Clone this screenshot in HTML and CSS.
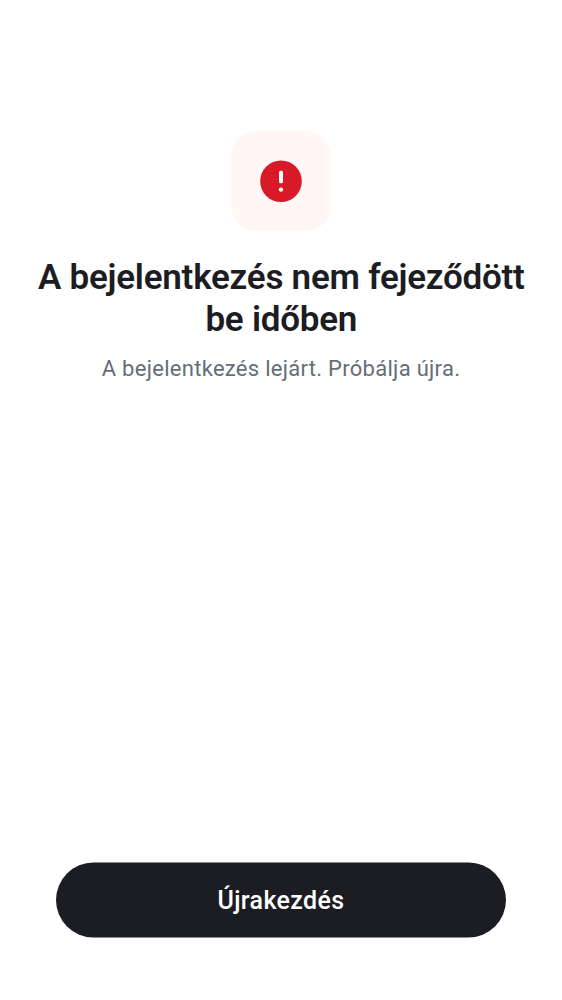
FILE: index.html
```html
<!DOCTYPE html>
<html lang="hu">
<head>
<meta charset="utf-8">
<title>Bejelentkezés</title>
<link rel="stylesheet" href="styles.css">
</head>
<body>
<main class="screen">
<div class="badge">
<svg class="badge-icon" viewBox="0 0 42 42" aria-hidden="true">
<circle cx="21" cy="21.2" r="20.8" fill="#d71928"/>
<rect x="19" y="10.7" width="4" height="12.6" rx="1.5" fill="#fff"/>
<circle cx="21" cy="29.6" r="2.2" fill="#fff"/>
</svg>
</div>
<h1 class="title">A bejelentkezés nem fejeződött<br>be időben</h1>
<p class="message">A bejelentkezés lejárt. Próbálja újra.</p>
<button class="restart" type="button">Újrakezdés</button>
</main>
</body>
</html>
```
FILE: styles.css
```css
body {
  margin: 0;
  background: #fff;
  font-family: Roboto, sans-serif;
}
.screen {
  box-sizing: border-box;
  height: 1000px;
  padding: 131px 0 63px;
  display: flex;
  flex-direction: column;
  align-items: center;
  text-align: center;
}
.badge {
  width: 100px;
  height: 100px;
  border-radius: 25px;
  background: #fff6f5;
  display: flex;
  align-items: center;
  justify-content: center;
}
.badge-icon {
  width: 42px;
  height: 42px;
}
.title {
  margin: 26px 0 0;
  font-size: 35px;
  line-height: 42px;
  font-weight: 600;
  letter-spacing: -0.24px;
  color: #1c1d23;
  white-space: nowrap;
  transform: translate(0.3px, 0.4px);
}
.message {
  margin: 14px 0 0;
  font-size: 22px;
  line-height: 28px;
  letter-spacing: 0.28px;
  color: #656d78;
  white-space: nowrap;
}
.restart {
  margin-top: auto;
  width: 450px;
  height: 75px;
  padding: 0;
  border: 0;
  border-radius: 37.5px;
  background: #1c1d22;
  color: #fff;
  font: 500 25px/30px Roboto, sans-serif;
  letter-spacing: 0.35px;
  transform: translateY(0.5px);
}
```
